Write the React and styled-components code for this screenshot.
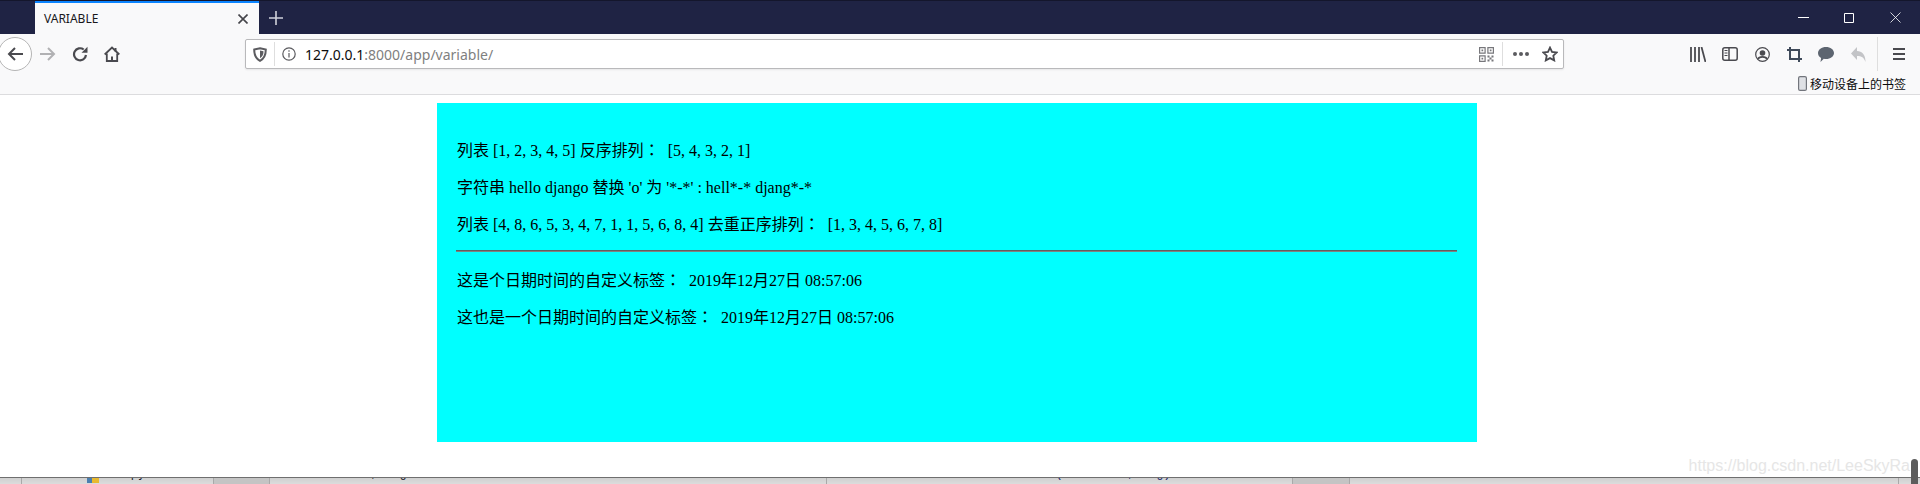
import React from 'react'
import styled, { createGlobalStyle } from 'styled-components'

const GlobalStyle = createGlobalStyle`
  html, body { margin: 0; padding: 0; height: 100%; overflow: hidden; background: #fff; }
  #root { height: 484px; }
`

const Root = styled.div`
  position: relative;
`

const Window = styled.div`
  width: 1920px;
  height: 484px;
  display: flex;
  flex-direction: column;
  overflow: hidden;
  font-family: "Noto Sans", "Noto Sans CJK SC", sans-serif;
`

const TabStrip = styled.div`
  height: 33px;
  flex: none;
  display: flex;
  background: #1f2344;
  border-top: 1px solid #14162c;
`

const Tab = styled.div`
  width: 224px;
  margin-left: 35px;
  display: flex;
  align-items: center;
  justify-content: space-between;
  box-sizing: border-box;
  padding: 0 11px 0 9px;
  background: #f9f9fa;
  border-top: 2px solid #0a84ff;
  font-size: 12px;
  color: #18181a;
`

const StripButton = styled.button`
  width: ${p => p.$w || 46}px;
  border: 0;
  padding: 0;
  background: none;
  display: flex;
  align-items: center;
  justify-content: center;
`

const WindowButtons = styled.div`
  margin-left: auto;
  padding-right: 2px;
  display: flex;
`

const Toolbar = styled.div`
  height: 60px;
  flex: none;
  display: grid;
  grid-template-rows: 40px 20px;
  background: #f9f9fa;
  border-bottom: 1px solid #dcdcde;
  box-sizing: content-box;
`

const NavRow = styled.div`
  display: flex;
  align-items: center;
`

const BackCircle = styled.div`
  width: 34px;
  height: 34px;
  margin-left: -2px;
  box-sizing: border-box;
  border: 1px solid #b5b5b5;
  border-radius: 50%;
  background: #fff;
  display: flex;
  align-items: center;
  justify-content: center;
  flex: none;
`

const NavIcon = styled.div`
  width: ${p => p.$w || 32}px;
  height: 32px;
  flex: none;
  display: flex;
  align-items: center;
  justify-content: center;
`

const UrlBar = styled.div`
  width: 1319px;
  height: 30px;
  margin-left: 117px;
  flex: none;
  box-sizing: border-box;
  display: flex;
  align-items: center;
  padding-right: 2px;
  background: #fff;
  border: 1px solid #b9b9bb;
  border-radius: 2px;
  box-shadow: 0 1px 2px rgba(0, 0, 0, 0.08);
  font-size: 14px;
`

const Divider = styled.span`
  width: 1px;
  height: ${p => p.$h || 24}px;
  background: #dedede;
  flex: none;
`

const UrlText = styled.div`
  margin-left: 2px;
  flex: 1;
  color: #808080;
  white-space: nowrap;
  b { font-weight: 400; color: #0c0c0d; }
`

const PanelIcons = styled.div`
  margin-left: 118px;
  display: flex;
  align-items: center;
`

const BookmarkGap = styled.span`
  width: 3px;
`

const BookmarkRow = styled.div`
  display: flex;
  justify-content: flex-end;
  align-items: center;
  padding-right: 14px;
  font-size: 12px;
  color: #0c0c0d;
  margin-top: -1px;
`

const Page = styled.main`
  flex: 1;
  min-height: 0;
  padding: 8px 0 0 437px;
  background: #fff;
`

const Panel = styled.section`
  width: 1040px;
  height: 339px;
  box-sizing: border-box;
  padding: 21px 20px 0 19px;
  background: #00ffff;
  color: #000;
  font-family: "Liberation Serif", "Noto Sans CJK TC", serif;
  font-size: 16px;
  line-height: 21px;
`

const Line = styled.p`
  margin: 16px 0;
  padding-left: 1px;
  white-space: pre;
`

const Rule = styled.hr`
  margin: -1px 0 18px;
  height: 2px;
  border: 0;
  background: linear-gradient(#5f5f5f 50%, #808080 50%);
`

const Watermark = styled.div`
  position: absolute;
  right: 10px;
  bottom: 9px;
  font-family: "Liberation Sans", sans-serif;
  font-size: 16px;
  color: #e6e6e6;
  white-space: nowrap;
`

const Taskbar = styled.div`
  height: 6px;
  flex: none;
  display: flex;
  background: linear-gradient(#d0d0d0, #dcdcdc);
  border-top: 1px solid #6f6f6f;
  font-family: "Liberation Mono", monospace;
  font-size: 12px;
  line-height: 14px;
  overflow: hidden;
`

const TaskCell = styled.div`
  width: ${p => p.$w}px;
  flex: none;
  display: flex;
  gap: 3px;
  padding-left: ${p => p.$pad || 0}px;
  box-sizing: border-box;
  border-right: 1px solid #a9a9a9;
  background: ${p => p.$bg || 'transparent'};
`

const TaskText = styled.span`
  margin-top: -11px;
  white-space: nowrap;
  color: ${p => p.$color || '#1a1a2a'};
`

const PyIcon = styled.span`
  width: 12px;
  height: 5px;
  background: linear-gradient(90deg, #4b7fb0 45%, #e8b92f 45%);
`

const Thumb = styled.div`
  position: absolute;
  right: 2px;
  bottom: 0;
  width: 7px;
  height: 25px;
  background: #5c5c5c;
  border-radius: 4px 4px 0 0;
`

const Ico = ({ w = 16, h = 16, children, fill = 'none', stroke = '#5b5b5f', sw = 2 }) => (
  <svg width={w} height={h} viewBox={`0 0 ${w} ${h}`} fill={fill} stroke={stroke} strokeWidth={sw}>
    {children}
  </svg>
)

export default function App() {
  return (
    <Root>
      <GlobalStyle />
      <Window>
        <TabStrip>
          <Tab>
            <span>VARIABLE</span>
            <Ico w={10} h={10} sw={1.6} stroke="#45454a"><path d="M.5.5l9 9M9.500.5l-9 9" /></Ico>
          </Tab>
          <StripButton $w={34}>
            <Ico w={14} h={14} sw={1.6} stroke="#d0d1da"><path d="M7 0v14M0 7h14" /></Ico>
          </StripButton>
          <WindowButtons>
            <StripButton $w={46}><Ico w={11} h={11} sw={1} stroke="#fff"><path d="M0 5.500h11" /></Ico></StripButton>
            <StripButton $w={46}><Ico w={10} h={10} sw={1} stroke="#fff"><path d="M.5.5h9v9h-9z" /></Ico></StripButton>
            <StripButton $w={46}><Ico w={11} h={11} sw={0.8} stroke="#fff"><path d="M.5.5l10 10M10.500.5l-10 10" /></Ico></StripButton>
          </WindowButtons>
        </TabStrip>

        <Toolbar>
          <NavRow>
            <BackCircle>
              <Ico w={16} h={14} sw={2} stroke="#4a4a4f"><path d="M16 7H2M8 1L2 7l6 6" /></Ico>
            </BackCircle>
            <NavIcon $w={32}>
              <Ico w={16} h={14} sw={2} stroke="#b1b1b3"><path d="M0 7h14M8 1l6 6-6 6" /></Ico>
            </NavIcon>
            <NavIcon $w={32}>
              <Ico w={16} h={16} sw={2.200} stroke="#4a4a4f">
                <path d="M14 9a6 6 0 1 1-2.300-5.500" />
                <path d="M15.500 .8v6h-6z" fill="#4a4a4f" stroke="none" />
              </Ico>
            </NavIcon>
            <NavIcon $w={32}>
              <Ico w={16} h={16} sw={1.800} stroke="#4a4a4f">
                <path d="M.7 8.500L8 1.500l7.300 7" />
                <path d="M2.800 7.500v7.500h10.400V7.500" />
                <path d="M11.500 2v3.500" strokeWidth="2" />
                <path d="M7 10.500h2V15H7z" fill="#4a4a4f" stroke="none" />
              </Ico>
            </NavIcon>
            <UrlBar>
              <NavIcon $w={28}>
                <Ico w={14} h={15} sw={2} stroke="#5b5b5f">
                  <path d="M7 1.200l5.800 1.300c0 5-1.200 9-5.800 11.300C2.400 11.500 1.200 7.500 1.200 2.500z" />
                  <path d="M7 3.500l3.500.8c0 3-.8 5.400-3.500 6.900z" fill="#5b5b5f" stroke="none" />
                </Ico>
              </NavIcon>
              <Divider />
              <NavIcon $w={28}>
                <Ico w={14} h={14} sw={1.200} stroke="#5b5b5f">
                  <circle cx="7" cy="7" r="6.200" />
                  <path d="M7 6v4.500M7 3.200v1.600" />
                </Ico>
              </NavIcon>
              <UrlText><b>127.0.0.1</b>:8000/app/variable/</UrlText>
              <NavIcon $w={32}>
                <Ico w={15} h={15} sw={1.200} stroke="#77777b">
                  <path d="M.6.6h5.500v5.500H.6zM8.900.6h5.500v5.500H8.900zM.6 8.900h5.500v5.500H.6z" />
                  <path d="M2.500 2.500h1.700v1.700H2.500zM10.800 2.500h1.700v1.700h-1.700zM2.500 10.800h1.700v1.700H2.500zM8.500 8.500h2v2h-2zM12.500 8.500h2v2h-2zM10.500 10.500h2v2h-2zM8.500 12.500h2v2h-2zM12.500 12.500h2v2h-2z" fill="#77777b" stroke="none" />
                </Ico>
              </NavIcon>
              <Divider />
              <NavIcon $w={36}>
                <Ico w={16} h={4} sw={0} stroke="none" fill="#5b5b5f">
                  <circle cx="2" cy="2" r="2" /><circle cx="8" cy="2" r="2" /><circle cx="14" cy="2" r="2" />
                </Ico>
              </NavIcon>
              <NavIcon $w={22}>
                <Ico w={16} h={16} sw={1.800} stroke="#4a4a4f"><path d="M8 1.600l2 4.300 4.700.6-3.400 3.200.9 4.700L8 12.100l-4.200 2.300.9-4.700L1.300 6.500l4.700-.6z" /></Ico>
              </NavIcon>
            </UrlBar>
            <PanelIcons>
              <NavIcon $w={32}>
                <Ico w={16} h={15} sw={1.800} stroke="#4a4a4f"><path d="M1 0v15M5 0v15M9 0v15M11.500 0l4 15" /></Ico>
              </NavIcon>
              <NavIcon $w={32}>
                <Ico w={16} h={14} sw={1.500} stroke="#4a4a4f">
                  <rect x=".8" y=".8" width="14.400" height="12.400" rx="2" />
                  <path d="M7 1v12" />
                  <path d="M2.500 3.500h3M2.500 6h3M2.500 8.500h3" strokeWidth="1.200" />
                </Ico>
              </NavIcon>
              <NavIcon $w={32}>
                <Ico w={15} h={15} sw={1.200} stroke="#4a4a4f">
                  <circle cx="7.500" cy="7.500" r="6.800" />
                  <circle cx="7.500" cy="6" r="2.800" fill="#4a4a4f" stroke="none" />
                  <path d="M3 12c1-2.800 8-2.800 9 0" strokeWidth="1.800" />
                </Ico>
              </NavIcon>
              <NavIcon $w={32}>
                <Ico w={15} h={15} sw={2} stroke="#3f4a5a"><path d="M0 3h12v12M3 0v12h12" /></Ico>
              </NavIcon>
              <NavIcon $w={32}>
                <Ico w={16} h={15} sw={0} stroke="none" fill="#5d6570">
                  <path d="M8 0c4.400 0 8 2.600 8 6s-3.600 6-8 6c-.8 0-1.500-.1-2.200-.2L2.500 15l.6-4C1.200 10 0 8.100 0 6c0-3.400 3.600-6 8-6z" />
                </Ico>
              </NavIcon>
              <NavIcon $w={32}>
                <Ico w={15} h={15} sw={0} stroke="none" fill="#c3c4c7">
                  <path d="M6 0v4c5 0 8.500 3.500 8.500 11-1.500-4.500-4-6-8.500-6v4L0 6.500z" />
                </Ico>
              </NavIcon>
              <NavIcon $w={3} />
              <Divider $h={34} />
              <NavIcon $w={42}>
                <Ico w={12} h={12} sw={2} stroke="#4a4a4f"><path d="M0 1h12M0 6h12M0 11h12" /></Ico>
              </NavIcon>
            </PanelIcons>
          </NavRow>
          <BookmarkRow>
            <Ico w={9} h={15} sw={1.200} stroke="#72757c"><rect x=".6" y=".6" width="7.800" height="13.800" rx="1.500" fill="#dfe1e5" /></Ico>
            <BookmarkGap />
            <span>移动设备上的书签</span>
          </BookmarkRow>
        </Toolbar>

        <Page>
          <Panel>
            <Line>列表 [1, 2, 3, 4, 5] 反序排列：  [5, 4, 3, 2, 1]</Line>
            <Line>字符串 hello django 替换 'o' 为 '*-*' : hell*-* djang*-*</Line>
            <Line>列表 [4, 8, 6, 5, 3, 4, 7, 1, 1, 5, 6, 8, 4] 去重正序排列：  [1, 3, 4, 5, 6, 7, 8]</Line>
            <Rule />
            <Line>这是个日期时间的自定义标签：  2019年12月27日 08:57:06</Line>
            <Line>这也是一个日期时间的自定义标签：  2019年12月27日 08:57:06</Line>
          </Panel>
        </Page>

        <Taskbar>
          <TaskCell $w={22} />
          <TaskCell $w={192} $pad={65}>
            <PyIcon />
            <TaskText>dnsipy</TaskText>
          </TaskCell>
          <TaskCell $w={56} $bg="#c4c4c4" />
          <TaskCell $w={557} $pad={36}>
            <TaskText>Forbidden, msg</TaskText>
          </TaskCell>
          <TaskCell $w={466} $pad={34}>
            <TaskText $color="#1c2a6a">raise AuthenticationFailed (Forbidden, msg)</TaskText>
          </TaskCell>
          <TaskCell $w={57} $bg="#c4c4c4" />
          <TaskCell $w={549} />
        </Taskbar>
      </Window>
      <Watermark>https://blog.csdn.net/LeeSkyRa</Watermark>
      <Thumb />
    </Root>
  )
}
